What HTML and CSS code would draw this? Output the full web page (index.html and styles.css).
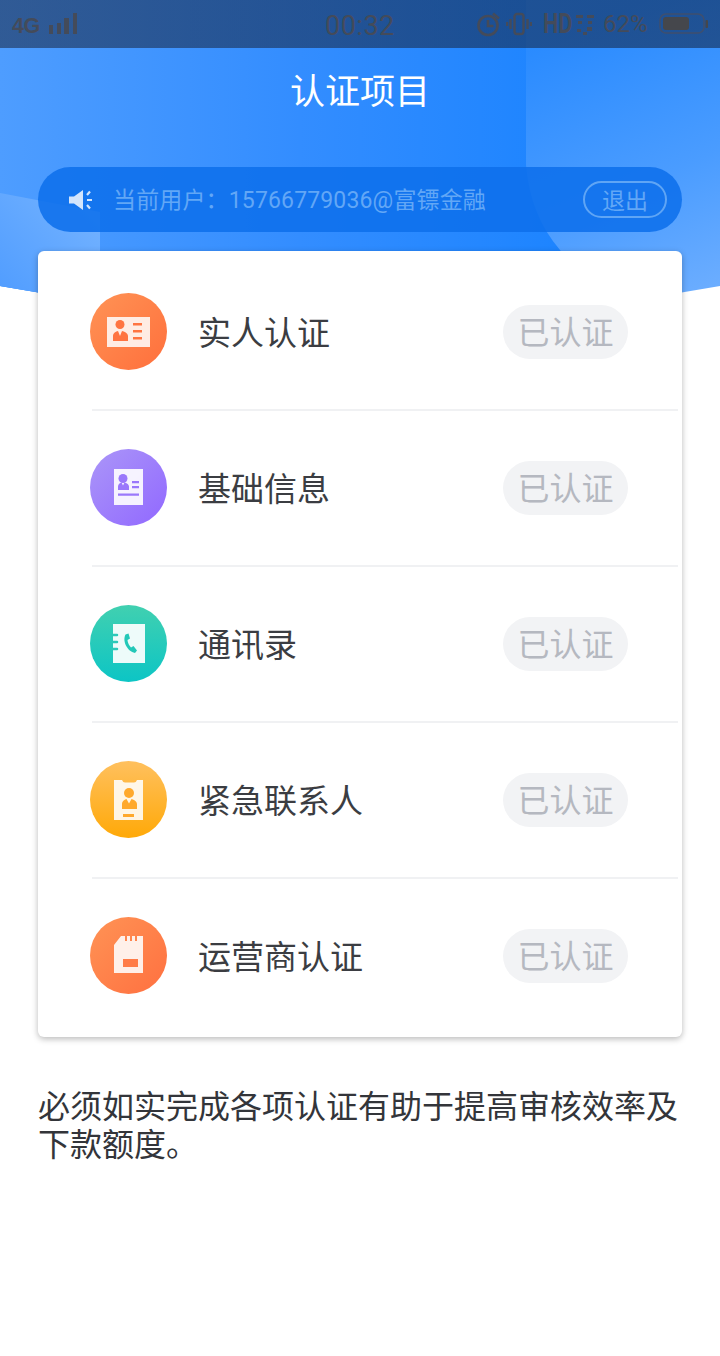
FILE: index.html
```html
<!DOCTYPE html>
<html lang="zh-CN">
<head>
<meta charset="utf-8">
<title>认证项目</title>
<link rel="stylesheet" href="styles.css">
</head>
<body>
<div class="page">
  <svg class="hero-bg" width="720" height="300" viewBox="0 0 720 300" aria-hidden="true">
    <defs>
      <linearGradient id="gRight" x1="0" y1="0" x2="1" y2="1">
        <stop offset="0.45" stop-color="#2a8bff"/><stop offset="0.75" stop-color="#4a9cff"/><stop offset="1" stop-color="#6fafff"/>
      </linearGradient>
      <linearGradient id="gMid" x1="0" y1="0" x2="1" y2="0">
        <stop offset="0" stop-color="#4e9dff"/><stop offset="0.5" stop-color="#338dff"/><stop offset="1" stop-color="#1a83ff"/>
      </linearGradient>
      <linearGradient id="gLeft" x1="1" y1="0" x2="0" y2="1">
        <stop offset="0" stop-color="#76b4ff"/><stop offset="1" stop-color="#4f9cff"/>
      </linearGradient>
      <clipPath id="heroClip"><path d="M0 0H720V286Q360 351 0 286Z"/></clipPath>
    </defs>
    <g clip-path="url(#heroClip)">
      <rect width="720" height="300" fill="url(#gRight)"/>
      <path d="M0 0H526V165Q530 215 560 250L600 300H0Z" fill="url(#gMid)"/>
      <path d="M0 193L100 212V300H0Z" fill="url(#gLeft)"/>
    </g>
  </svg>

  <div class="content">
    <div class="status">
      <div class="status-left">
        <span class="net">4G</span>
        <svg class="signal" width="29" height="24" viewBox="0 0 29 24"><path d="M1 13h4v9H1zM9 11h4v11H9zM16 6h5v16h-5zM25 1h4v21h-4z" fill="#444b5a"/></svg>
      </div>
      <span class="time">00:32</span>
      <div class="status-right">
        <svg class="st-alarm" width="26" height="26" viewBox="0 0 26 26" fill="none" stroke="#444b5a" stroke-width="2.6"><circle cx="13" cy="14.500" r="9.500"/><path d="M13 9v6h5.500M18 2.500l6 5"/></svg>
        <svg class="st-vib" width="26" height="24" viewBox="0 0 26 24" fill="none" stroke="#444b5a" stroke-width="2.400"><rect x="8.500" y="2" width="9" height="20" rx="2.500"/><path d="M4.500 7v10M21.500 7v10M1 10v4M25 10v4"/></svg>
        <span class="hd">HD</span>
        <svg class="wf" width="20" height="24" viewBox="0 0 20 24"><path d="M1 3h7v3H1zM12 3h7v3h-7zM3 9h4v3H3zM13 9h4v3h-4zM2 17h4v3H2zM12 15h5v4h-5zM8 20h4v3H8z" fill="#444b5a"/></svg>
        <span class="pct">62%</span>
        <svg class="bat" width="50" height="24" viewBox="0 0 50 24"><rect x="1" y="2" width="44" height="19" rx="6" fill="none" stroke="#3f4f6e" stroke-width="1.500"/><rect x="4" y="5" width="26" height="13" rx="3" fill="#45474c"/><rect x="46.500" y="8" width="2.500" height="8" rx="1" fill="#45474c"/></svg>
      </div>
    </div>

    <h1 class="title">认证项目</h1>

    <div class="notice">
      <svg class="speaker" width="26" height="26" viewBox="0 0 26 26"><path d="M1 9.500h5L15 3v20l-9-6.500H1z" fill="#d3e5fc"/><path d="M19 8l3-3.500M19 13h5M19 18l3 3.500" stroke="#d3e5fc" stroke-width="2.200" fill="none"/></svg>
      <span class="notice-text">当前用户：15766779036@富镖金融</span>
      <span class="logout">退出</span>
    </div>

    <div class="card">
      <div class="row">
        <svg class="icon" width="77" height="77" viewBox="0 0 77 77">
          <defs>
            <linearGradient id="i1" x1="0" y1="0" x2="1" y2="1"><stop offset="0" stop-color="#ff9355"/><stop offset="1" stop-color="#ff6f3c"/></linearGradient>
          </defs>
          <circle cx="38.500" cy="38.500" r="38.500" fill="url(#i1)"/>
          <rect x="17" y="24" width="43" height="30" fill="#fff" fill-opacity=".85"/>
          <circle cx="30" cy="31.500" r="4.500" fill="#ff7441"/>
          <path d="M23 48v-5c0-3 3-4.500 5-5l2 5 2-5c2 .5 6 2 6 5v5z" fill="#ff7441"/>
          <path d="M43 30h9v2.500h-9zM43 37h9v2.500h-9zM43 44h9v2.500h-9z" fill="#ff7441"/>
        </svg>
        <span class="name">实人认证</span>
        <span class="badge">已认证</span>
      </div>
      <hr class="divider">
      <div class="row">
        <svg class="icon" width="77" height="77" viewBox="0 0 77 77">
          <defs>
            <linearGradient id="i2" x1="0" y1="0" x2="1" y2="1"><stop offset="0" stop-color="#ab96f8"/><stop offset="1" stop-color="#9168ff"/></linearGradient>
          </defs>
          <circle cx="38.500" cy="38.500" r="38.500" fill="url(#i2)"/>
          <rect x="24" y="20" width="29" height="36" fill="#fff" fill-opacity=".9"/>
          <circle cx="33" cy="29.500" r="4.500" fill="#9a78fb"/>
          <path d="M28 41v-3.500c0-2.500 2-3.500 3.500-4l1.500 3 1.500-3c1.500.5 4.500 1.500 4.500 4V41z" fill="#9a78fb"/>
          <path d="M42 32h7v2.200h-7zM42 37h7v2.200h-7zM28 44.500h21v2.200H28z" fill="#9a78fb"/>
        </svg>
        <span class="name">基础信息</span>
        <span class="badge">已认证</span>
      </div>
      <hr class="divider">
      <div class="row">
        <svg class="icon" width="77" height="77" viewBox="0 0 77 77">
          <defs>
            <linearGradient id="i3" x1="0" y1="0" x2="0" y2="1"><stop offset="0" stop-color="#41d0b0"/><stop offset="1" stop-color="#0cc5c5"/></linearGradient>
          </defs>
          <circle cx="38.500" cy="38.500" r="38.500" fill="url(#i3)"/>
          <path d="M23 19h32v39H23z" fill="#fff" fill-opacity=".92"/>
          <path d="M22 30h5M22 37h5M22 44h5" stroke="#2cc9b9" stroke-width="2.500" fill="none" stroke-linecap="round"/>
          <path d="M35.500 29.500c-3.500 7 2 17 9.500 18.500l2-2.500-3.500-4.500-2.500 1.500c-1.500-1.500-3.500-5-3.500-7.500l2.500-1.500-1.500-5z" fill="#22c8b8"/>
        </svg>
        <span class="name">通讯录</span>
        <span class="badge">已认证</span>
      </div>
      <hr class="divider">
      <div class="row">
        <svg class="icon" width="77" height="77" viewBox="0 0 77 77">
          <defs>
            <linearGradient id="i4" x1="0" y1="0" x2="0" y2="1"><stop offset="0" stop-color="#ffc05e"/><stop offset="1" stop-color="#ffa908"/></linearGradient>
          </defs>
          <circle cx="38.500" cy="38.500" r="38.500" fill="url(#i4)"/>
          <path d="M24 19h8q1 2.500 3 2.500h9q2 0 3-2.500h6v40H24z" fill="#fff" fill-opacity=".88"/>
          <circle cx="39" cy="32" r="5" fill="#ffa92c"/>
          <path d="M32 48v-5c0-3 3-4.500 4.500-5l2.500 4.500 2.500-4.500c1.500.5 5.500 2 5.500 5v5z" fill="#ffa92c"/>
          <path d="M33 53h11v3H33z" fill="#ffa92c"/>
        </svg>
        <span class="name">紧急联系人</span>
        <span class="badge">已认证</span>
      </div>
      <hr class="divider">
      <div class="row">
        <svg class="icon" width="77" height="77" viewBox="0 0 77 77">
          <defs>
            <linearGradient id="i5" x1="0" y1="0" x2="1" y2="1"><stop offset="0" stop-color="#ff9355"/><stop offset="1" stop-color="#ff7040"/></linearGradient>
          </defs>
          <circle cx="38.500" cy="38.500" r="38.500" fill="url(#i5)"/>
          <path d="M31 19h4v5h2v-5h3v5h2v-5h3v5h2v-5h6v37H24V28z" fill="#fff" fill-opacity=".88"/>
          <rect x="33" y="42" width="15" height="8" fill="#ff7c48"/>
        </svg>
        <span class="name">运营商认证</span>
        <span class="badge">已认证</span>
      </div>
    </div>

    <p class="tip">必须如实完成各项认证有助于提高审核效率及下款额度。</p>
  </div>
</div>
</body>
</html>
```
FILE: styles.css
```css
* { box-sizing: border-box; }
html, body { margin: 0; padding: 0; background: #fff; }
body { font-family: Roboto, "Noto Sans CJK SC", sans-serif; width: 720px; min-height: 1356px; overflow-x: hidden; }
.page { position: relative; width: 720px; }
.hero-bg { position: absolute; top: 0; left: 0; display: block; }
.content { position: relative; display: flex; flex-direction: column; }

.status { height: 48px; background: linear-gradient(90deg, rgba(30,50,85,.62), rgba(20,45,85,.62)); display: flex; align-items: center; justify-content: space-between; position: relative; padding: 0 11px 0 12px; color: #444b5a; }
.status-left { display: flex; align-items: center; gap: 8px; }
.net { font: 700 21.500px/24px "Liberation Sans", sans-serif; letter-spacing: -.5px; margin-top: 4px; }
.signal { display: block; }
.time { position: absolute; left: 325px; top: 11px; font: 400 27px/30px Roboto, sans-serif; letter-spacing: .5px; }
.status-right { display: flex; align-items: center; }
.st-vib { margin-left: 5px; }
.hd { width: 30px; margin-left: 8px; font: 700 27px/28px Roboto, sans-serif; text-align: center; transform: scaleX(.8); white-space: nowrap; }
.wf { margin-left: 5px; }
.pct { margin-left: 8px; width: 47px; font: 400 24px/26px Roboto, sans-serif; }
.bat { margin-left: 9px; }

.title { margin: 0; height: 86px; padding-bottom: 5px; display: flex; align-items: center; justify-content: center; font-family: "Noto Sans CJK SC", sans-serif; font-weight: 400; font-size: 35px; color: #fff; }

.notice { margin: 33px 38px 0; height: 65px; border-radius: 32.500px; background: rgba(14, 112, 236, .88); display: flex; align-items: center; padding: 0 15px 0 30px; }
.speaker { flex: none; display: block; }
.notice-text { margin-left: 19px; flex: 1; font-size: 23px; letter-spacing: .15px; color: #62a7f6; white-space: nowrap; padding-bottom: 3px; }
.logout { width: 84px; height: 37px; padding-bottom: 2px; border: 2px solid #5fa5f5; border-radius: 19px; display: flex; align-items: center; justify-content: center; font-size: 23px; color: #62a7f6; }

.card { margin: 19px 38px 0; background: #fff; border-radius: 6px; box-shadow: 0 2px 6px rgba(0, 0, 0, .28); padding: 4px 0; display: flex; flex-direction: column; }
.row { height: 154px; display: flex; align-items: center; padding: 0 54px 0 52px; }
.icon { flex: none; display: block; margin-top: -2px; }
.name { margin-left: 31px; flex: 1; font-size: 33px; color: #3b3d42; white-space: nowrap; padding-bottom: 3px; }
.badge { width: 125px; height: 54px; padding-bottom: 4px; border-radius: 27px; background: #f2f3f5; color: #b5b8c0; font-size: 32px; display: flex; align-items: center; justify-content: center; }
.divider { margin: 0 4px 0 54px; height: 2px; border: 0; background: #f0f1f3; }

.tip { margin: 51px 38px 0; font-size: 32px; line-height: 38px; color: #33353a; }
```
